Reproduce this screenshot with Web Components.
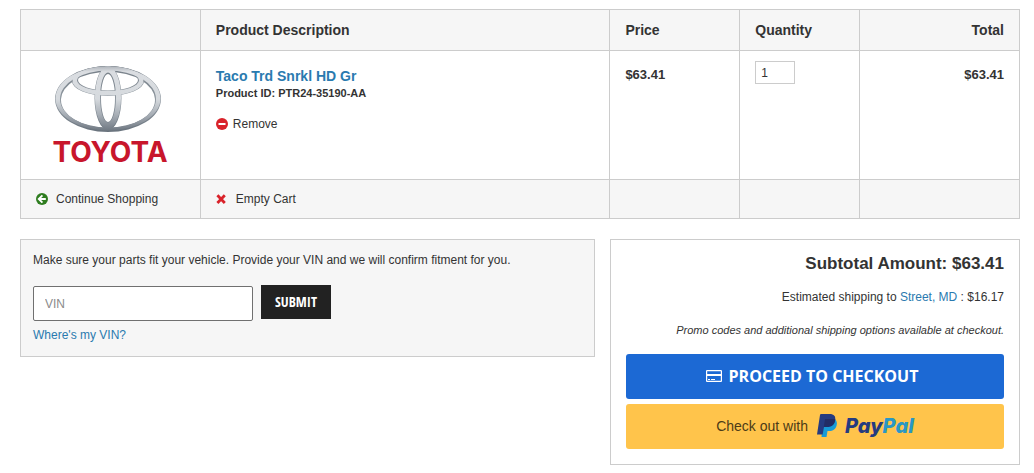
<!DOCTYPE html>
<html lang="en">
<head>
<meta charset="utf-8">
<meta name="viewport" content="width=device-width, initial-scale=1">
<title>Shopping Cart</title>
<style>
  body { margin: 0; background: #fff; color: #333; font: 12px/18px "Liberation Sans", Arial, sans-serif; }
</style>
</head>
<body>
<cart-page></cart-page>

<template id="cart-page">
  <style>
    :host { display: block; padding: 9px 14px 8px 20px; --line: #ccc; --shade: #f6f6f6; --link: #2a7aaf; }
    .panels { display: grid; grid-template-columns: 575fr 410fr; gap: 15px; align-items: start; margin-top: 20px; }
  </style>
  <cart-table></cart-table>
  <div class="panels">
    <vin-panel></vin-panel>
    <cart-summary></cart-summary>
  </div>
</template>

<template id="cart-table">
  <style>
    :host { display: block; }
    table { width: 100%; border-collapse: collapse; table-layout: fixed; }
    th, td { box-sizing: border-box; border: 1px solid var(--line); padding: 0 15px; text-align: left; }
    th { height: 41px; font-size: 14px; background: var(--shade); }
    td { height: 129px; vertical-align: top; }
    tfoot td { height: 39px; padding-top: 1px; vertical-align: middle; background: var(--shade); }
    .photo { width: 18%; }
    .desc { width: 41%; }
    .price { width: 13%; }
    .qty { width: 12%; }
    .end { text-align: right; }
    .logo { vertical-align: middle; }
    .name { display: block; margin-top: 16px; font-size: 14px; font-weight: bold; color: var(--link); text-decoration: none; }
    .sku { display: block; margin-bottom: 14px; font-size: 11px; line-height: 16px; font-weight: bold; }
    .sum { padding-top: 15px; font-size: 13px; font-weight: bold; }
    input { box-sizing: border-box; display: block; width: 40px; height: 23px; margin-top: 10px; padding: 0 5px; border: 1px solid #ccc; font: inherit; color: #333; background: #fff; }
  </style>
  <table>
    <thead>
      <tr>
        <th class="photo"></th>
        <th class="desc">Product Description</th>
        <th class="price">Price</th>
        <th class="qty">Quantity</th>
        <th class="end">Total</th>
      </tr>
    </thead>
    <tbody>
      <tr>
        <td class="logo"><toyota-logo></toyota-logo></td>
        <td>
          <a class="name" href="#product">Taco Trd Snrkl HD Gr</a>
          <span class="sku">Product ID: PTR24-35190-AA</span>
          <icon-link gap="5">
            <svg slot="icon" width="12" height="12" viewBox="0 0 12 12"><circle cx="6" cy="6" r="6" fill="#d9222a"/><path d="M2.5 5h7v2h-7z" fill="#fff"/></svg>
            Remove
          </icon-link>
        </td>
        <td class="sum">$63.41</td>
        <td><input type="text" value="1" aria-label="Quantity"></td>
        <td class="sum end">$63.41</td>
      </tr>
    </tbody>
    <tfoot>
      <tr>
        <td>
          <icon-link>
            <svg slot="icon" width="12" height="12" viewBox="0 0 12 12"><circle cx="6" cy="6" r="6" fill="#2f7d20"/><path d="M6.4 2.4 2.8 6l3.600 3.600M3 6h6.800" fill="none" stroke="#fff" stroke-width="1.9"/></svg>
            Continue Shopping
          </icon-link>
        </td>
        <td>
          <icon-link>
            <svg slot="icon" width="12" height="12" viewBox="0 0 12 12"><path d="M1.400 2.200 8.800 10M8.800 2.200 1.400 10" stroke="#d9222a" stroke-width="2.8"/></svg>
            Empty Cart
          </icon-link>
        </td>
        <td></td>
        <td></td>
        <td></td>
      </tr>
    </tfoot>
  </table>
</template>

<template id="icon-link">
  <style>
    :host { display: block; }
    a { display: inline-flex; align-items: center; gap: 8px; color: inherit; text-decoration: none; }
    :host([gap="5"]) a { gap: 5px; }
    ::slotted(svg) { flex: none; display: block; }
  </style>
  <a href="#action"><slot name="icon"></slot><span><slot></slot></span></a>
</template>

<template id="toyota-logo">
  <style>
    :host { display: flex; justify-content: center; }
    svg { display: block; }
    text { font: 700 28px Inter, sans-serif; fill: #c8162c; }
  </style>
  <svg width="130" height="112" viewBox="-5 -6 130 112" role="img" aria-label="Toyota">
    <defs>
      <linearGradient id="chrome" gradientUnits="userSpaceOnUse" x1="0" y1="0" x2="0" y2="68">
        <stop offset="0" stop-color="#a5abb2"/><stop offset=".1" stop-color="#dadde1"/>
        <stop offset=".5" stop-color="#d6dade"/><stop offset=".75" stop-color="#a3aab2"/><stop offset="1" stop-color="#68717b"/>
      </linearGradient>
      <linearGradient id="shade" gradientUnits="userSpaceOnUse" x1="0" y1="0" x2="0" y2="68">
        <stop offset="0" stop-color="#747d86"/><stop offset=".5" stop-color="#8e979f"/><stop offset="1" stop-color="#68727c"/>
      </linearGradient>
    </defs>
    <g fill-rule="evenodd" transform="translate(-2 0)">
      <g fill="url(#shade)">
        <path d="M7 34a53 33 0 1 0 106 0a53 33 0 1 0-106 0zM13 35a47 28 0 1 0 94 0a47 28 0 1 0-94 0z"/>
        <path d="M24 16a36 15 0 1 0 72 0a36 15 0 1 0-72 0zM30 15a30 10.500 0 1 0 60 0a30 10.500 0 1 0-60 0z"/>
        <path d="M46.500 33a13.500 32 0 1 0 27 0a13.500 32 0 1 0-27 0zM53 33a7 24 0 1 0 14 0a7 24 0 1 0-14 0z"/>
      </g>
      <g fill="url(#chrome)">
        <path d="M7.500 33.500a52.500 32 0 1 0 105 0a52.500 32 0 1 0-105 0zM12 34a48 28.500 0 1 0 96 0a48 28.500 0 1 0-96 0z"/>
        <path d="M47 32.500a13 31.500 0 1 0 26 0a13 31.500 0 1 0-26 0zM52 32.500a8 25 0 1 0 16 0a8 25 0 1 0-16 0z"/>
        <path d="M24.500 16a35.500 14.500 0 1 0 71 0a35.500 14.500 0 1 0-71 0zM29 15.300a31 10.800 0 1 0 62 0a31 10.800 0 1 0-62 0z"/>
      </g>
    </g>
    <text x="60" y="97" text-anchor="middle">TOYOTA</text>
  </svg>
</template>

<template id="vin-panel">
  <style>
    :host { display: block; border: 1px solid var(--line); background: var(--shade); padding: 11px 12px 12px; }
    p { margin: 0 0 16px; }
    form { display: flex; align-items: flex-start; gap: 8px; margin-bottom: 5px; }
    input { box-sizing: border-box; width: 220px; height: 35px; margin-top: 1px; padding: 0 11px; border: 1px solid #707070; border-radius: 2px; background: #fff; color: #333; font: inherit; }
    input::placeholder { color: #8a8a8a; }
    button { height: 34px; padding: 0 14px; border: 0; background: #222; color: #fff; font: bold 14px/18px "Open Sans Condensed", "Liberation Sans Narrow", "Open Sans", sans-serif; }
    a { color: var(--link); text-decoration: none; }
  </style>
  <p>Make sure your parts fit your vehicle. Provide your VIN and we will confirm fitment for you.</p>
  <form>
    <input type="text" placeholder="VIN" aria-label="VIN">
    <button type="button">SUBMIT</button>
  </form>
  <a href="#vin-help">Where's my VIN?</a>
</template>

<template id="cart-summary">
  <style>
    :host { display: block; border: 1px solid var(--line); padding: 12px 15px 15px; text-align: right; }
    h2 { margin: 0 0 12px; font-size: 17px; line-height: 24px; }
    p { margin: 0 0 15px; }
    .note { font-size: 11px; font-style: italic; }
    a { color: var(--link); text-decoration: none; }
    button { display: flex; align-items: center; justify-content: center; width: 100%; height: 45px; margin: 0; padding: 0; border: 0; border-radius: 3px; }
    .checkout { gap: 7px; padding: 0 6px 2px 0; background: #1c69d4; color: #fff; font: bold 16px/24px "Open Sans", sans-serif; }
    .paypal { gap: 9px; margin-top: 5px; padding-bottom: 2px; background: #ffc44b; color: #4c3b17; font: 14px/18px "Liberation Sans", Arial, sans-serif; }
    svg { display: block; flex: none; }
  </style>
  <h2>Subtotal Amount: $63.41</h2>
  <p>Estimated shipping to <a href="#shipping">Street, MD</a> : $16.17</p>
  <p class="note">Promo codes and additional shipping options available at checkout.</p>
  <button type="button" class="checkout">
    <svg width="16" height="12" viewBox="0 0 16 12"><rect x=".6" y=".6" width="14.800" height="10.800" rx=".5" fill="none" stroke="#fff" stroke-width="1.200"/><path d="M1 4h14v2H1zM2 9h2v1H2zM5 9h4v1H5z" fill="#fff"/></svg>
    PROCEED TO CHECKOUT
  </button>
  <button type="button" class="paypal">
    <span>Check out with</span>
    <paypal-logo></paypal-logo>
  </button>
</template>

<template id="paypal-logo">
  <style>
    :host { display: flex; align-items: center; gap: 8px; font: italic 800 20px/24px Inter, sans-serif; color: #253b80; }
    svg { display: block; }
    b { font-weight: inherit; color: #2997c5; }
  </style>
  <svg width="20" height="23" viewBox="0 0 20 23" aria-hidden="true">
    <path d="M6 5h11.500c2 1.300 2.800 3.200 2.200 6-.9 4.200-3.600 6-7.700 6h-1.500l-1 6H4.500z" fill="#179bd7"/>
    <path d="M4 0h8.500c4.500 0 6.500 2.300 5.600 6.500-.9 4.500-3.900 6.500-8.600 6.500H7L5.600 20.500H0L3 1Q3.200 0 4 0z" fill="#253b80"/>
    <path d="M8 5h9.800l.4.500C17.700 10.800 14.500 13 9.500 13H6.800z" fill="#222d65"/>
  </svg>
  <span>Pay<b>Pal</b></span>
</template>

<script>
  const define = name => customElements.define(name, class extends HTMLElement {
    constructor() {
      super();
      this.attachShadow({ mode: 'open' }).append(document.getElementById(name).content.cloneNode(true));
    }
  });
  ['icon-link', 'toyota-logo', 'paypal-logo', 'cart-table', 'vin-panel', 'cart-summary', 'cart-page'].forEach(define);
</script>
</body>
</html>
